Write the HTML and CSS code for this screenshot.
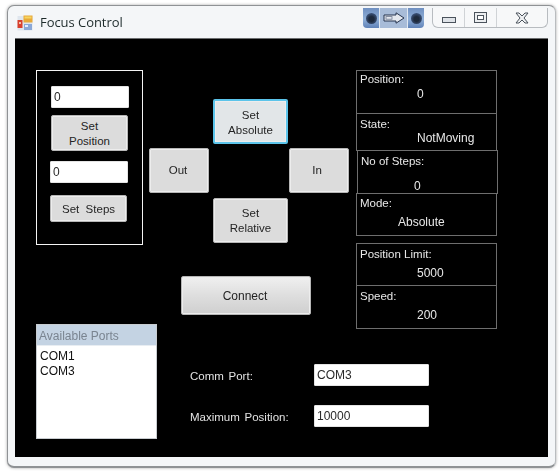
FILE: index.html
```html
<!DOCTYPE html>
<html lang="en">
<head>
<meta charset="utf-8">
<title>Focus Control</title>
<link rel="stylesheet" href="styles.css">
</head>
<body>
<div class="window">
  <header class="titlebar">
    <svg class="app-icon" viewBox="0 0 16 16" aria-hidden="true">
      <rect x="0.5" y="1" width="15" height="14.5" fill="#dfe6ee"/>
      <rect x="6.5" y="0.5" width="9" height="7" fill="#e8a93a"/>
      <rect x="7.5" y="1.5" width="7" height="2" fill="#f6d560"/>
      <rect x="0.5" y="5" width="5" height="8" fill="#d8402e"/>
      <rect x="2" y="7" width="2" height="2" fill="#f4c0a8"/>
      <rect x="7" y="9" width="8" height="6" fill="#8aa8d8"/>
      <rect x="8" y="10" width="3" height="2" fill="#e6eefa"/>
    </svg>
    <span class="title">Focus Control</span>
    <div class="remote">
      <span class="orb"></span>
      <span class="arrow-cell">
        <svg viewBox="0 0 22 12" width="22" height="12" aria-hidden="true">
          <path d="M1 3h12V0.8L21 6l-8 5.2V9H1z" fill="#e4e8ee" stroke="#27354f" stroke-width="1"/>
          <rect x="3" y="4.6" width="6" height="2.6" fill="none" stroke="#6d7890" stroke-width="0.8"/>
        </svg>
      </span>
      <span class="orb"></span>
    </div>
    <div class="controls">
      <span class="ctl ctl-min">
        <svg viewBox="0 0 14 6" width="14" height="6" aria-hidden="true">
          <rect x="0.5" y="0.5" width="13" height="5" fill="#dfe3e8" stroke="#4b535c"/>
        </svg>
      </span>
      <span class="ctl ctl-max">
        <svg viewBox="0 0 13 11" width="13" height="11" aria-hidden="true">
          <rect x="0.5" y="0.5" width="12" height="10" fill="#eceef0" stroke="#4b535c"/>
          <rect x="3.5" y="3.5" width="6" height="4" fill="#fff" stroke="#4b535c"/>
        </svg>
      </span>
      <span class="ctl ctl-close">
        <svg viewBox="0 0 14 12" width="14" height="12" aria-hidden="true">
          <path d="M1 1h3l3 3 3-3h3L9 6l4 5h-3L7 8l-3 3H1l4-5z" fill="#eef0f2" stroke="#4b535c" stroke-width="1"/>
        </svg>
      </span>
    </div>
  </header>

  <main class="client">
    <div class="col-left">
      <section class="steps-group">
        <input class="field field-a" value="0" aria-label="Position value">
        <button class="btn btn-setpos">Set<br>Position</button>
        <input class="field field-b" value="0" aria-label="Steps value">
        <button class="btn btn-setsteps">Set&nbsp; Steps</button>
      </section>
      <section class="ports">
        <div class="ports-head">Available Ports</div>
        <div class="ports-item">COM1</div>
        <div class="ports-item">COM3</div>
      </section>
    </div>

    <div class="col-right">
      <div class="top-row">
        <div class="col-mid">
          <div class="pad">
            <button class="btn pad-abs">Set<br>Absolute</button>
            <button class="btn pad-out">Out</button>
            <button class="btn pad-in">In</button>
            <button class="btn pad-rel">Set<br>Relative</button>
          </div>
          <button class="btn connect">Connect</button>
        </div>
        <div class="status">
          <div class="panel panel-pos"><span class="plabel">Position:</span><span class="pvalue val-pos">0</span></div>
          <div class="panel panel-state"><span class="plabel">State:</span><span class="pvalue val-state">NotMoving</span></div>
          <div class="panel panel-steps"><span class="plabel">No of Steps:</span><span class="pvalue val-steps">0</span></div>
          <div class="panel panel-mode"><span class="plabel">Mode:</span><span class="pvalue val-mode">Absolute</span></div>
          <div class="panel panel-limit"><span class="plabel">Position Limit:</span><span class="pvalue val-num">5000</span></div>
          <div class="panel panel-speed"><span class="plabel">Speed:</span><span class="pvalue val-num">200</span></div>
        </div>
      </div>
      <form class="settings">
        <label class="set-label" for="comm">Comm Port:</label>
        <input class="field field-wide" id="comm" value="COM3">
        <label class="set-label" for="maxpos">Maximum Position:</label>
        <input class="field field-wide" id="maxpos" value="10000">
      </form>
    </div>
  </main>
</div>
</body>
</html>
```
FILE: styles.css
```css
* { box-sizing: border-box; }

html, body {
  margin: 0;
  width: 560px;
  height: 472px;
  overflow: hidden;
  background: #fff;
}

body {
  padding: 5px 4px 4px 7px;
  font-family: "Liberation Sans", Arial, sans-serif;
  font-size: 11.5px;
  color: #e8e8e8;
}

.window {
  width: 549px;
  height: 463px;
  padding: 0 7px 9px 7px;
  background: #f4f6f8;
  border: 1px solid #8f9295;
  border-bottom-width: 2px;
  border-right-color: #b9bcbf;
  border-radius: 7px;
  box-shadow: 0 0 3px rgba(90, 90, 90, 0.55);
  display: flex;
  flex-direction: column;
  filter: blur(0.3px);
}

.titlebar {
  height: 32px;
  flex: none;
  display: flex;
  align-items: flex-start;
}

.app-icon {
  width: 16px;
  height: 16px;
  margin: 9px 0 0 2px;
  flex: none;
}

.title {
  margin: 7px 0 0 7px;
  font-family: "Open Sans", "Noto Sans", sans-serif;
  font-size: 13px;
  line-height: 18px;
  letter-spacing: -0.05px;
  color: #1d2a2a;
  white-space: nowrap;
}

.remote {
  margin: 2px 0 0 auto;
  width: 61px;
  height: 20px;
  display: flex;
  background: linear-gradient(#6f8fc0, #8eaed6 55%, #5f82b8);
  border-radius: 0 0 4px 4px;
}

.orb {
  width: 16px;
  flex: none;
  display: flex;
  align-items: center;
  justify-content: center;
}

.orb::before {
  content: "";
  width: 11px;
  height: 11px;
  border-radius: 50%;
  background: radial-gradient(circle at 50% 55%, #1e2a3c 30%, #34486a 60%, #4b6696);
}

.arrow-cell {
  flex: 1;
  display: flex;
  align-items: center;
  justify-content: center;
  background: #a8bcd8;
  border-left: 1px solid #e0e8f2;
  border-right: 1px solid #e0e8f2;
}

.controls {
  margin: 2px 0 0 8px;
  width: 116px;
  height: 20px;
  flex: none;
  display: flex;
  background: #f7f8f9;
  border: 1px solid #b8bcc0;
  border-top: 0;
  border-radius: 0 0 6px 6px;
}

.ctl {
  display: flex;
  align-items: center;
  justify-content: center;
}

.ctl-min { width: 32px; border-right: 1px solid #d0d3d6; padding-top: 5px; }
.ctl-max { width: 32px; border-right: 1px solid #d0d3d6; }
.ctl-close { flex: 1; padding-top: 1px; }

.client {
  flex: 1;
  min-height: 0;
  background: #000;
  border-top: 1px solid #6c6e70;
  display: flex;
  padding: 31px 0 0 21px;
}

.col-left {
  width: 113px;
  flex: none;
  display: flex;
  flex-direction: column;
}

.steps-group {
  width: 107px;
  height: 175px;
  border: 1px solid #f4f4f4;
  flex: none;
  padding-top: 15px;
  display: flex;
  flex-direction: column;
  align-items: flex-start;
}

.field {
  background: #fff;
  border: 1px solid #e4e4e4;
  border-radius: 1px;
  padding: 0 2px;
  font: 12px "Liberation Sans", Arial, sans-serif;
  color: #2a2a2a;
  outline: none;
}

.field-a { width: 78px; height: 22px; margin-left: 14px; }
.field-b { width: 78px; height: 22px; margin: 10px 0 0 13px; }
.field-wide { width: 115px; height: 22px; }

.btn {
  background: #dcdcdc;
  border: 1px solid #b6b6b6;
  border-radius: 2px;
  padding: 0;
  font: 11.5px/15px "Liberation Sans", Arial, sans-serif;
  color: #242424;
  box-shadow: inset 0 0 0 1px #ededed;
}

.btn-setpos { width: 77px; height: 36px; margin: 7px 0 0 14px; padding-top: 2px; }
.btn-setsteps { width: 77px; height: 27px; margin: 12px 0 0 13px; padding-top: 2px; }

.ports {
  width: 121px;
  height: 115px;
  margin-top: 79px;
  flex: none;
  background: #fff;
  border: 1px solid #c8ccd0;
  color: #111;
  font-size: 12px;
  line-height: 15px;
}

.ports-head {
  height: 21px;
  margin-bottom: 3px;
  padding: 4px 0 0 2px;
  background: #c4d3e3;
  border-bottom: 1px solid #e8edf2;
  color: #7a8490;
}

.ports-item { padding-left: 3px; }

.col-right {
  flex: 1;
  display: flex;
  flex-direction: column;
}

.top-row {
  display: flex;
  height: 260px;
  flex: none;
}

.col-mid {
  width: 207px;
  flex: none;
  padding-top: 29px;
}

.pad {
  display: grid;
  grid-template-columns: 64px 76px 60px;
  grid-template-rows: 49px 50px 45px;
}

.pad-abs {
  grid-column: 2;
  grid-row: 1;
  width: 75px;
  height: 45px;
  padding-top: 2px;
  background: #e2e6e8;
  border: 2px solid #5cc4ea;
}

.pad-out {
  grid-column: 1;
  grid-row: 2;
  width: 60px;
  height: 45px;
  padding-right: 2px;
}

.pad-in {
  grid-column: 3;
  grid-row: 2;
  width: 60px;
  height: 45px;
  padding-right: 4px;
}

.pad-rel {
  grid-column: 2;
  grid-row: 3;
  width: 75px;
  height: 45px;
}

.connect {
  display: block;
  width: 130px;
  height: 39px;
  margin: 33px 0 0 32px;
  padding: 2px 2px 0 0;
  font-size: 12px;
  background: linear-gradient(#f0f0f0, #dedede 50%, #cfcfcf);
}

.status {
  width: 142px;
  flex: none;
  display: flex;
  flex-direction: column;
}

.panel {
  width: 141px;
  border: 1px solid #6e6e6e;
  display: flex;
  flex-direction: column;
  padding: 3px 0 0 3px;
  line-height: 15px;
  flex: none;
}

.panel-pos { height: 44px; padding-top: 1px; }
.panel-state { height: 38px; margin-top: -1px; }
.panel-steps { height: 44px; margin: -1px 0 0 1px; }
.panel-mode { height: 43px; margin-top: -1px; padding-top: 2px; }
.panel-limit { height: 43px; margin-top: 7px; }
.panel-speed { height: 44px; margin-top: -1px; }

.pvalue { font-size: 12px; }
.val-pos { margin-left: 57px; margin-top: 0; }
.val-num { margin-left: 57px; margin-top: 4px; }
.val-state { margin-left: 57px; margin-top: -1px; }
.val-steps { margin-left: 53px; margin-top: 10px; }
.val-mode { margin-left: 38px; margin-top: 4px; }

.settings {
  display: grid;
  grid-template-columns: 124px 115px;
  grid-auto-rows: 22px;
  row-gap: 19px;
  align-items: center;
  margin: 34px 0 0 41px;
}

.set-label { color: #e2e2e2; padding-top: 2px; word-spacing: 1.5px; }
```
